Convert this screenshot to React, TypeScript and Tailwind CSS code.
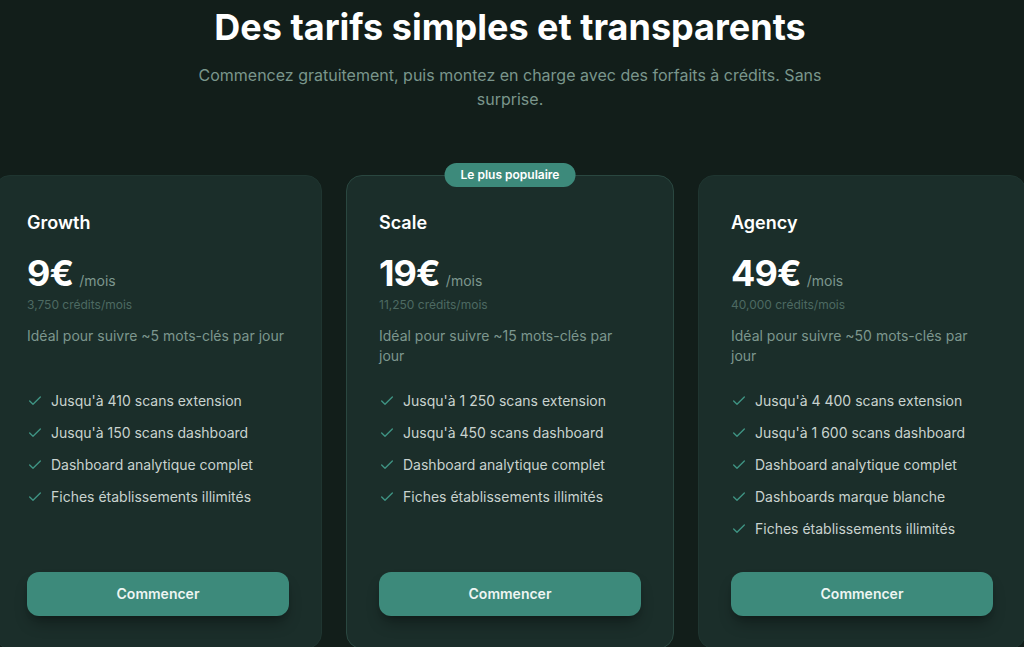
import { Check } from "lucide-react";

type Plan = {
    name: string;
    price: string;
    credits: string;
    desc: string;
    features: string[];
    popular?: boolean;
};

const plans: Plan[] = [
    {
        name: "Growth",
        price: "9€",
        credits: "3,750 crédits/mois",
        desc: "Idéal pour suivre ~5 mots-clés par jour",
        features: [
            "Jusqu'à 410 scans extension",
            "Jusqu'à 150 scans dashboard",
            "Dashboard analytique complet",
            "Fiches établissements illimités",
        ],
    },
    {
        name: "Scale",
        price: "19€",
        credits: "11,250 crédits/mois",
        desc: "Idéal pour suivre ~15 mots-clés par jour",
        features: [
            "Jusqu'à 1 250 scans extension",
            "Jusqu'à 450 scans dashboard",
            "Dashboard analytique complet",
            "Fiches établissements illimités",
        ],
        popular: true,
    },
    {
        name: "Agency",
        price: "49€",
        credits: "40,000 crédits/mois",
        desc: "Idéal pour suivre ~50 mots-clés par jour",
        features: [
            "Jusqu'à 4 400 scans extension",
            "Jusqu'à 1 600 scans dashboard",
            "Dashboard analytique complet",
            "Dashboards marque blanche",
            "Fiches établissements illimités",
        ],
    },
];

function PlanCard({ plan }: { plan: Plan }) {
    return (
        <div
            className={`relative flex w-[328px] shrink-0 flex-col rounded-2xl border px-8 pt-[33px] pb-8 ${
                plan.popular ? "border-[#2a4740] bg-[#1b2e2a]" : "border-[#1f3530] bg-[#1b2e2a]"
            }`}
        >
            {plan.popular && (
                <div className="absolute -top-[13px] left-1/2 -translate-x-1/2 rounded-full bg-[#3d8a7b] px-4 py-[4px] text-xs font-semibold leading-4 text-white whitespace-nowrap">
                    Le plus populaire
                </div>
            )}
            <h3 className="text-lg font-semibold leading-7 text-white">{plan.name}</h3>
            <div className="mt-4 flex items-baseline gap-1.5">
                <span className="text-4xl font-bold leading-10 tracking-tight text-white">{plan.price}</span>
                <span className="text-sm text-[#7d978e]">/mois</span>
            </div>
            <p className="mt-1 text-xs leading-4 text-[#4d6a62]">{plan.credits}</p>
            <p className="mt-[13px] min-h-[40px] text-sm leading-5 text-[#7d978e]">{plan.desc}</p>
            <ul className="mt-[25px] mb-[33px] flex flex-col gap-3">
                {plan.features.map((f) => (
                    <li key={f} className="flex items-center gap-2 text-sm leading-5 text-[#c9d3cf]">
                        <Check className="h-4 w-4 shrink-0 text-[#3f9484]" strokeWidth={2} />
                        {f}
                    </li>
                ))}
            </ul>
            <button className="mt-auto h-11 w-full rounded-xl bg-[#3d8a7b] text-sm font-semibold text-[#eef5f2] shadow-lg shadow-black/30">
                Commencer
            </button>
        </div>
    );
}

export default function App() {
    return (
        <div
            className="min-h-screen overflow-hidden bg-[#121e1a] pt-[7px] pr-1"
            style={{ fontFamily: "Inter, 'Noto Sans', sans-serif" }}
        >
            <h1 className="text-center text-4xl font-bold leading-10 text-white">
                Des tarifs simples et transparents
            </h1>
            <p className="mx-auto mt-4 max-w-[650px] text-center text-base leading-6 text-[#7a968c]">
                Commencez gratuitement, puis montez en charge avec des forfaits à crédits. Sans surprise.
            </p>
            <div className="mt-16 flex justify-center gap-6">
                {plans.map((p) => (
                    <PlanCard key={p.name} plan={p} />
                ))}
            </div>
        </div>
    );
}
